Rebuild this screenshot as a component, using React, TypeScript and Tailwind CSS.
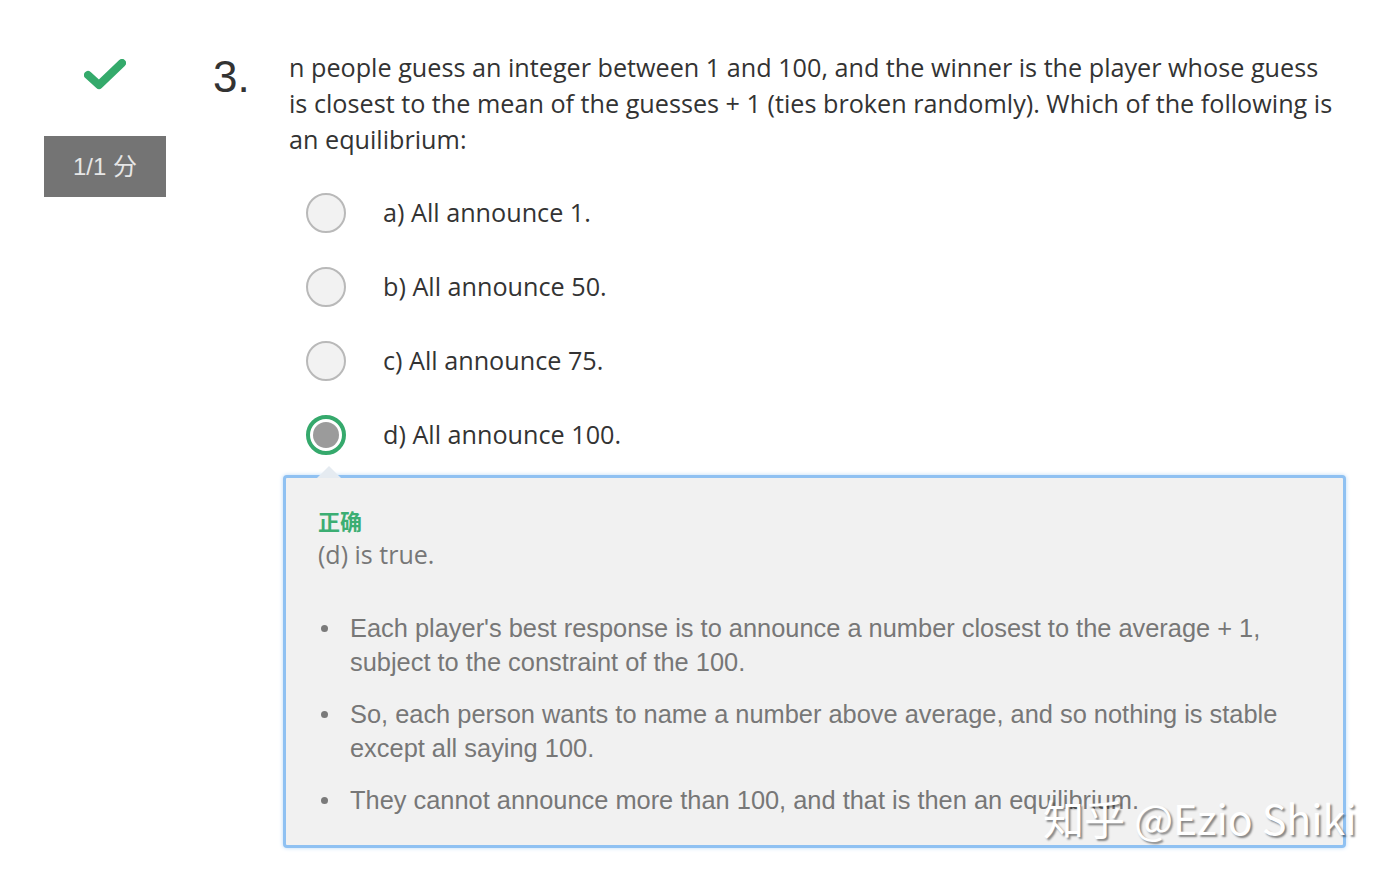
import React from "react";

function Radio({ selected }: { selected?: boolean }) {
  if (selected) {
    return (
      <div className="w-[40px] h-[40px] rounded-full border-[4px] border-[#35a96c] bg-white flex items-center justify-center">
        <div className="w-[26px] h-[26px] rounded-full bg-[#9b9b9b]" />
      </div>
    );
  }
  return <div className="w-[40px] h-[40px] rounded-full border-2 border-[#b9b9b9] bg-[#f2f2f2]" />;
}

const options = [
  "a) All announce 1.",
  "b) All announce 50.",
  "c) All announce 75.",
  "d) All announce 100.",
];

const bullets = [
  "Each player's best response is to announce a number closest to the average + 1, subject to the constraint of the 100.",
  "So, each person wants to name a number above average, and so nothing is stable except all saying 100.",
  "They cannot announce more than 100, and that is then an equilibrium.",
];

export default function App() {
  return (
    <div className="relative w-[1396px] h-[876px] bg-white overflow-hidden" style={{ fontFamily: '"Open Sans", "Noto Sans CJK SC", sans-serif' }}>
      <div className="flex pt-[49px]">
        {/* left column */}
        <div className="w-[166px] pl-[44px] shrink-0 flex flex-col items-center">
          <svg width="42" height="32" viewBox="0 0 42 32" className="mt-[10px]">
            <path d="M4 16 L15 26 L38 4" fill="none" stroke="#34aa6b" strokeWidth="8" strokeLinecap="round" strokeLinejoin="round" />
          </svg>
          <div className="mt-[45px] w-[122px] h-[61px] bg-[#747474] flex items-center justify-center text-[24px] text-[#e6e6e6]" style={{ fontFamily: '"Liberation Sans", "Noto Sans CJK SC", sans-serif' }}>
            1/1 分
          </div>
        </div>
        {/* number */}
        <div className="w-[123px] pl-[47px] shrink-0">
          <div className="text-[44px] leading-[52px] text-[#333] mt-[2px]" style={{ fontFamily: '"Liberation Sans", sans-serif' }}>3.</div>
        </div>
        {/* content */}
        <div className="w-[1060px] shrink-0">
          <p className="w-[1048px] text-[25.2px] leading-[36px] text-[#333]">
            n people guess an integer between 1 and 100, and the winner is the player whose guess is closest to the mean of the guesses + 1 (ties broken randomly). Which of the following is an equilibrium:
          </p>
          <div className="mt-[19px] pl-[17px]">
            {options.map((o, i) => (
              <div key={o} className="h-[74px] flex items-center">
                <Radio selected={i === 3} />
                <span className="ml-[37px] text-[25.2px] text-[#333]">{o}</span>
              </div>
            ))}
          </div>
          <div className="relative mt-[3px] -ml-[6px] w-[1063px] border-[3px] border-[#8fc1f2] rounded-[4px] bg-[#f1f1f1] shadow-[0_0_4px_#bcdaf7] pl-[32px] pr-[40px] pt-[26px] pb-[28px]">
            <div className="absolute -top-[12px] left-[31px] w-0 h-0 border-l-[12px] border-r-[12px] border-b-[12px] border-l-transparent border-r-transparent border-b-[#e5ebf1]" />
            <div className="text-[22px] leading-[32px] font-bold text-[#3cae73]" style={{ fontFamily: '"Noto Sans CJK SC", sans-serif' }}>正确</div>
            <div className="text-[25px] leading-[36px] text-[#777]">(d) is true.</div>
            <ul className="mt-[39px]" style={{ fontFamily: '"Liberation Sans", sans-serif' }}>
              {bullets.map((b, i) => (
                <li key={i} className={`flex text-[25.4px] leading-[34px] text-[#777] ${i > 0 ? "mt-[18px]" : ""}`}>
                  <span className="w-[32px] shrink-0 flex items-start pt-[14px] pl-[3px]">
                    <span className="block w-[7px] h-[7px] rounded-full bg-[#7a7a7a]" />
                  </span>
                  <span>{b}</span>
                </li>
              ))}
            </ul>
          </div>
        </div>
      </div>
      <div
        className="absolute left-[1043px] top-[792px] text-[41px] leading-[50px] text-white whitespace-nowrap"
        style={{ fontFamily: '"Noto Sans CJK SC", "Liberation Sans", sans-serif', textShadow: "2px 2px 2px rgba(0,0,0,0.45)" }}
      >
        知乎 @Ezio Shiki
      </div>
    </div>
  );
}
